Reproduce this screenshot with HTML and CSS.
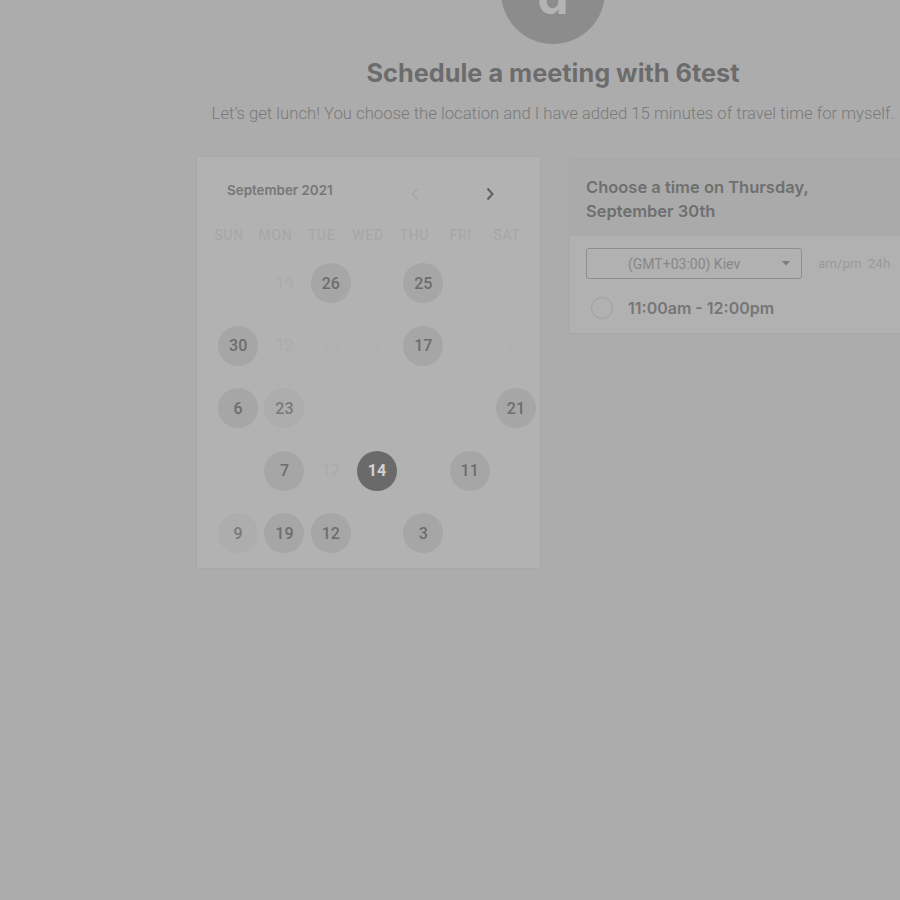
FILE: index.html
```html
<!DOCTYPE html>
<html lang="en">
<head>
<meta charset="utf-8">
<title>Schedule a meeting with 6test</title>
<link rel="stylesheet" href="styles.css">
</head>
<body>
<div class="page">
  <div class="avatar"><span>d</span></div>
  <h1 class="title">Schedule a meeting with 6test</h1>
  <p class="subtitle">Let’s get lunch! You choose the location and I have added 15 minutes of travel time for myself.</p>

  <div class="content">
    <section class="calendar">
      <div class="cal-head">
        <span class="month">September 2021</span>
        <span class="nav">
          <svg class="arrow prev" width="10" height="14" viewBox="0 0 10 14"><path d="M7.5 1.5 2.5 7l5 5.5" fill="none" stroke="currentColor" stroke-width="1.6"/></svg>
          <svg class="arrow next" width="10" height="14" viewBox="0 0 10 14"><path d="M2.5 1.5 7.5 7l-5 5.5" fill="none" stroke="currentColor" stroke-width="2"/></svg>
        </span>
      </div>
      <div class="weekdays">
        <span>SUN</span><span>MON</span><span>TUE</span><span>WED</span><span>THU</span><span>FRI</span><span>SAT</span>
      </div>
      <div class="days">
        <span class="day"></span><span class="day faint">19</span><span class="day avail">26</span><span class="day"></span><span class="day avail">25</span><span class="day"></span><span class="day"></span>
        <span class="day avail">30</span><span class="day faint">12</span><span class="day ghost">15</span><span class="day ghost">2</span><span class="day avail">17</span><span class="day"></span><span class="day ghost">25</span>
        <span class="day avail">6</span><span class="day avail textured">23</span><span class="day"></span><span class="day"></span><span class="day"></span><span class="day"></span><span class="day avail">21</span>
        <span class="day ghost">5</span><span class="day avail">7</span><span class="day faint">12</span><span class="day selected">14</span><span class="day"></span><span class="day avail">11</span><span class="day"></span>
        <span class="day avail textured">9</span><span class="day avail">19</span><span class="day avail">12</span><span class="day"></span><span class="day avail">3</span><span class="day"></span><span class="day"></span>
      </div>
    </section>

    <section class="times">
      <div class="times-head">Choose a time on Thursday, September 30th</div>
      <div class="tz-row">
        <div class="select">
          <span>(GMT+03:00) Kiev</span>
          <svg class="caret" width="8" height="5" viewBox="0 0 8 5"><path d="M0 0h8L4 4.5z" fill="currentColor"/></svg>
        </div>
        <div class="fmt"><span>am/pm</span><span>24h</span></div>
      </div>
      <label class="slot">
        <span class="radio"></span>
        <span class="slot-text">11:00am - 12:00pm</span>
      </label>
    </section>
  </div>
</div>
</body>
</html>
```
FILE: styles.css
```css
html, body {
  margin: 0;
  padding: 0;
}
body {
  background: #acacac;
  height: 900px;
  overflow: hidden;
  font-family: Roboto, "Liberation Sans", sans-serif;
}
.page {
  width: 712px;
  margin-left: 197px;
  display: flex;
  flex-direction: column;
  align-items: center;
}
.avatar {
  width: 104px;
  height: 104px;
  margin-top: -60px;
  border-radius: 50%;
  background: #8c8c8c;
  display: flex;
  align-items: center;
  justify-content: center;
}
.avatar span {
  font-family: Inter, "Liberation Sans", sans-serif;
  font-weight: 700;
  font-size: 50px;
  line-height: 1;
  color: #b4b4b4;
  margin-top: 8px;
}
.title {
  margin: 14px 0 0;
  font-family: Inter, "Liberation Sans", sans-serif;
  font-weight: 700;
  font-size: 25.3px;
  line-height: 30px;
  color: #6c6c6c;
  white-space: nowrap;
}
.subtitle {
  margin: 15px 0 0;
  font-size: 16.7px;
  line-height: 22px;
  font-weight: 300;
  color: #7a7a7a;
  white-space: nowrap;
}
.content {
  align-self: stretch;
  margin-top: 32px;
  display: flex;
  align-items: flex-start;
  gap: 30px;
}
.calendar {
  width: 343px;
  box-sizing: border-box;
  padding: 20px 0 3px 18px;
  background: #b2b2b2;
  box-shadow: 0 0 3px rgba(0,0,0,0.05);
}
.cal-head {
  height: 26px;
  display: flex;
  align-items: center;
  justify-content: space-between;
  padding-left: 12px;
}
.month {
  font-family: Inter, "Liberation Sans", sans-serif;
  font-size: 13.4px;
  font-weight: 600;
  color: #777;
}
.nav {
  display: flex;
  align-items: center;
  gap: 65px;
  margin-right: 45px;
  margin-top: 8px;
}
.arrow.prev { color: #a6a6a6; }
.arrow.next { color: #616161; }
.weekdays {
  margin-top: 22px;
  margin-left: -9px;
  height: 20px;
  display: grid;
  grid-template-columns: repeat(7, 46.3px);
  align-items: center;
  justify-items: center;
  font-size: 14px;
  letter-spacing: 0.6px;
  color: #a6a6a6;
}
.days {
  margin-top: 7px;
  display: grid;
  grid-template-columns: repeat(7, 46.3px);
  grid-auto-rows: 62.5px;
  align-items: center;
  justify-items: center;
}
.day {
  width: 40px;
  height: 40px;
  border-radius: 50%;
  display: flex;
  align-items: center;
  justify-content: center;
  font-size: 16px;
  font-weight: 500;
  color: #6d6d6d;
}
.day.faint {
  color: #a8a8a8;
  font-weight: 300;
}
.day.ghost {
  color: #afafaf;
  font-weight: 300;
}
.day.avail {
  background: #a6a6a6;
}
.day.textured {
  background: #adadad;
  color: #7a7a7a;
}
.day.selected {
  background: #6a6a6a;
  color: #d2d2d2;
  font-weight: 700;
}
.times {
  flex: 1;
  margin-top: 3px;
  background: #b1b1b1;
  box-shadow: 0 0 3px rgba(0,0,0,0.05);
  padding-bottom: 5px;
}
.times-head {
  background: #aaaaaa;
  padding: 15px 60px 13px 16px;
  font-family: Inter, "Liberation Sans", sans-serif;
  font-size: 16.5px;
  font-weight: 600;
  line-height: 24px;
  color: #6f6f6f;
}
.tz-row {
  display: flex;
  align-items: center;
  gap: 16px;
  margin: 12px 0 0 16px;
}
.select {
  width: 216px;
  height: 31px;
  box-sizing: border-box;
  border: 1px solid #8e8e8e;
  border-radius: 3px;
  display: flex;
  align-items: center;
  justify-content: space-between;
  padding: 0 11px 0 41px;
  font-size: 14px;
  color: #878787;
}
.caret { color: #7c7c7c; }
.fmt {
  display: flex;
  gap: 6px;
  font-size: 13.4px;
  color: #9a9a9a;
}
.slot {
  display: flex;
  align-items: center;
  gap: 15px;
  margin: 9px 0 0 21px;
  height: 40px;
}
.radio {
  width: 22px;
  height: 22px;
  box-sizing: border-box;
  border: 1px solid #9f9f9f;
  border-radius: 50%;
}
.slot-text {
  font-family: Inter, "Liberation Sans", sans-serif;
  font-size: 16px;
  font-weight: 600;
  color: #767676;
}
```
